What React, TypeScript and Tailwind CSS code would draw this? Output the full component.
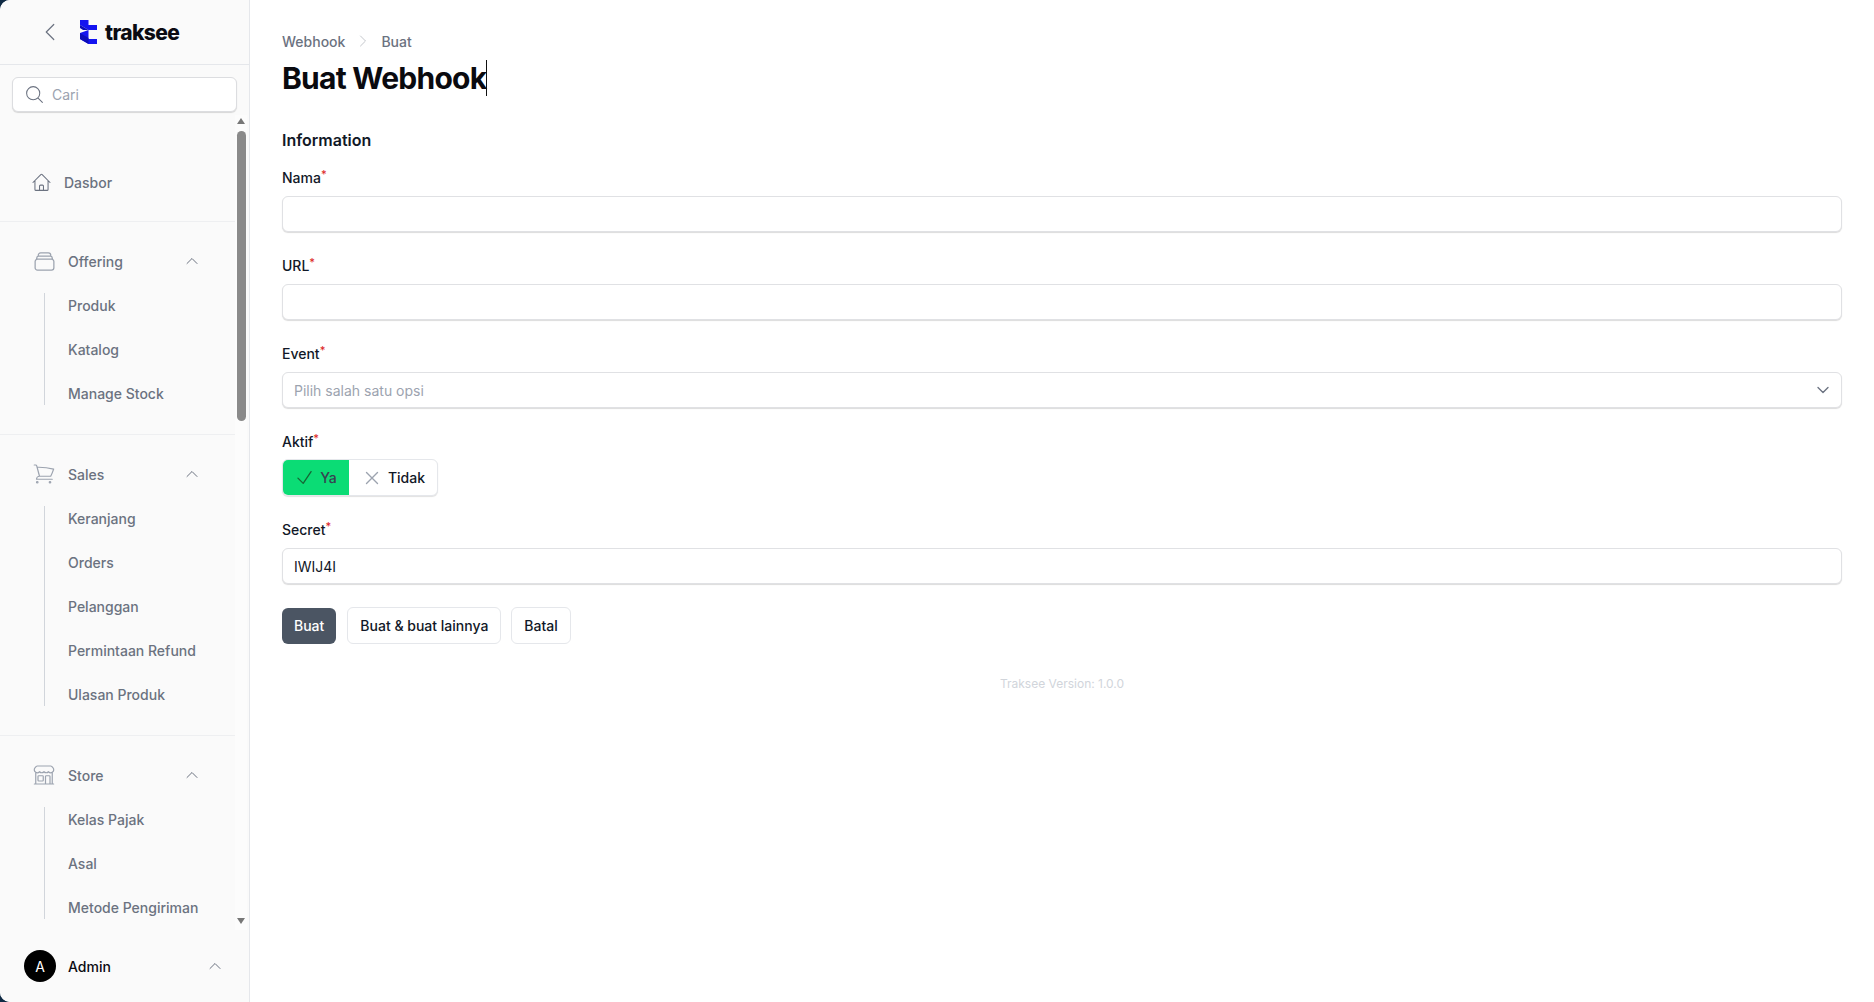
import {
  HiOutlineBuildingStorefront,
  HiOutlineCheck,
  HiOutlineChevronDown,
  HiOutlineChevronLeft,
  HiOutlineChevronRight,
  HiOutlineChevronUp,
  HiOutlineHome,
  HiOutlineMagnifyingGlass,
  HiOutlineRectangleStack,
  HiOutlineShoppingCart,
  HiOutlineXMark,
} from 'react-icons/hi2';
import type { IconType } from 'react-icons';

type NavGroup = { label: string; icon: IconType; iconClass: string; items: string[] };

const groups: NavGroup[] = [
  { label: 'Offering', icon: HiOutlineRectangleStack, iconClass: 'h-[25px] w-[25px]', items: ['Produk', 'Katalog', 'Manage Stock'] },
  { label: 'Sales', icon: HiOutlineShoppingCart, iconClass: 'h-[24px] w-[24px]', items: ['Keranjang', 'Orders', 'Pelanggan', 'Permintaan Refund', 'Ulasan Produk'] },
  { label: 'Store', icon: HiOutlineBuildingStorefront, iconClass: 'h-[24px] w-[24px]', items: ['Kelas Pajak', 'Asal', 'Metode Pengiriman'] },
];

function Logo() {
  return (
    <svg width="17" height="24" viewBox="0 0 17 24" className="shrink-0">
      <path d="M0 0H8.5V5H17V10H8.5L0 5Z" fill="#1414f0" />
      <path d="M0 5L8.5 10H3L0 8Z" fill="#0b0bb8" />
      <path d="M0 13L8.5 10V19H17V24H8.5L0 19Z" fill="#1414f0" />
      <path d="M0 13L8.5 18V24L0 19Z" fill="#0b0bb8" />
    </svg>
  );
}

function Label({ text }: { text: string }) {
  return (
    <div className="flex h-[20px] items-center text-[14px] leading-5 font-medium text-[#111827]">
      {text}
      <span className="relative -top-[4px] text-[11px] leading-none text-[#dc2626]">*</span>
    </div>
  );
}

function Field({ label, value }: { label: string; value?: string }) {
  return (
    <div>
      <Label text={label} />
      <div className="mt-[8px] flex h-9 items-center rounded-md border border-[#e0e1e4] bg-white px-[11px] text-[14px] text-[#111827] shadow-[0_1px_1px_rgba(0,0,0,0.14)]">
        {value}
      </div>
    </div>
  );
}

function Sidebar() {
  return (
    <aside className="flex h-full w-[250px] shrink-0 flex-col rounded-l-[10px] border-r border-[#e5e7eb] bg-[#fafafa]">
      <div className="flex h-[65px] shrink-0 items-center border-b border-[#e5e7eb] pl-[38px]">
        <HiOutlineChevronLeft className="h-[24px] w-[24px] text-[#6b7280]" strokeWidth={1.2} />
        <div className="ml-[18px] flex items-center gap-[8px]">
          <Logo />
          <span className="text-[21px] leading-none font-extrabold tracking-[-0.6px] text-[#0b0b12]">traksee</span>
        </div>
      </div>
      <div className="flex h-[50px] shrink-0 items-start px-3 pt-[12px]">
        <div className="flex h-[35px] w-[225px] items-center rounded-md border border-[#dcdde0] bg-white pl-[11px] text-[14px] text-[#9ca3af] shadow-[0_1px_1px_rgba(0,0,0,0.14)]">
          <HiOutlineMagnifyingGlass className="h-[21px] w-[21px] text-[#6b7280]" strokeWidth={1.2} />
          <span className="ml-[7px]">Cari</span>
        </div>
      </div>
      <div className="flex min-h-0 flex-1 pr-[2px]">
        <nav className="min-w-0 flex-1 overflow-hidden">
          <div className="flex h-[107px] items-end border-b border-[#eeeff1] pb-[27px] pl-[31px]">
            <div className="flex h-6 items-center">
              <HiOutlineHome className="h-[21px] w-[21px] text-[#6b7280]" strokeWidth={1.2} />
              <span className="ml-[12px] text-[14px] font-medium text-[#6b7280]">Dasbor</span>
            </div>
          </div>
          {groups.map((g) => (
            <div key={g.label} className="border-b border-[#eeeff1] pt-[27px] pb-[19px] last:border-b-0">
              <div className="flex h-6 items-center pl-[32px]">
                <div className="flex w-6 shrink-0 justify-center">
                  <g.icon className={`shrink-0 text-[#9ca3af] ${g.iconClass}`} strokeWidth={1.2} />
                </div>
                <span className="ml-[12px] flex-1 text-[14px] font-medium text-[#6b7280]">{g.label}</span>
                <HiOutlineChevronUp className="mr-[35px] h-4 w-4 text-[#6b7280]" />
              </div>
              <div className="relative mt-[10px] ml-[44px] pl-[24px]">
                <div className="absolute top-[10px] bottom-[10px] left-0 w-px bg-[#d1d5db]" />
                {g.items.map((item) => (
                  <div key={item} className="flex h-[44px] items-center text-[14px] font-medium whitespace-nowrap text-[#6b7280]">
                    {item}
                  </div>
                ))}
              </div>
            </div>
          ))}
        </nav>
        <div className="flex w-[12px] shrink-0 flex-col items-center bg-[#fcfcfc] pt-[3px] pb-[6px]">
          <div className="h-0 w-0 border-x-[4px] border-b-[6px] border-x-transparent border-b-[#777]" />
          <div className="mt-[7px] h-[290px] w-[9px] rounded-full bg-[#8a8a8a]" />
          <div className="flex-1" />
          <div className="h-0 w-0 border-x-[4px] border-t-[6px] border-x-transparent border-t-[#777]" />
        </div>
      </div>
      <div className="flex h-[72px] shrink-0 items-center pl-[24px]">
        <div className="flex h-8 w-8 items-center justify-center rounded-full bg-black text-[14px] text-white">A</div>
        <span className="ml-[12px] flex-1 text-[14px] font-medium text-[#0b0b12]">Admin</span>
        <HiOutlineChevronUp className="mr-[26px] h-4 w-4 text-[#6b7280]" />
      </div>
    </aside>
  );
}

export default function App() {
  return (
    <div className="h-[1002px] w-[1874px] overflow-hidden bg-[#0f2a44] font-['Inter',sans-serif]">
      <div className="flex h-full rounded-l-[10px] bg-white">
        <Sidebar />
        <main className="min-w-0 flex-1 px-[32px]">
          <div className="mt-[31px] flex h-5 items-center text-[14px] font-medium text-[#6b7280]">
            <span>Webhook</span>
            <HiOutlineChevronRight className="mx-[10px] h-4 w-4 text-[#c4c7cc]" />
            <span>Buat</span>
          </div>
          <h1 className="mt-[9px] flex h-9 items-center text-[30px] leading-9 font-bold tracking-[-0.75px] text-[#0a0a0f]">
            Buat Webhook
            <span className="h-9 w-px bg-[#111]" />
          </h1>
          <h2 className="mt-[32px] text-[16px] leading-6 font-semibold text-[#111827]">Information</h2>
          <div className="mt-[16px] flex flex-col gap-[24px]">
            <Field label="Nama" />
            <Field label="URL" />
            <div>
              <Label text="Event" />
              <div className="mt-[8px] flex h-9 items-center justify-between rounded-md border border-[#e0e1e4] bg-white pr-[10px] pl-[11px] text-[14px] text-[#9ca3af] shadow-[0_1px_1px_rgba(0,0,0,0.14)]">
                <span>Pilih salah satu opsi</span>
                <HiOutlineChevronDown className="h-4 w-4 text-[#6b7280]" strokeWidth={2} />
              </div>
            </div>
            <div>
              <Label text="Aktif" />
              <div className="mt-[7px] flex h-[37px] w-[156px] overflow-hidden rounded-md border border-[#e5e7eb] bg-white text-[14px] font-medium shadow-[0_1px_1px_rgba(0,0,0,0.12)]">
                <div className="-ml-px flex w-[67px] items-center justify-center gap-[5px] bg-[#0bdc75] text-[#374151]">
                  <HiOutlineCheck className="h-[21px] w-[21px] text-[#166534]" strokeWidth={1.5} />
                  Ya
                </div>
                <div className="flex flex-1 items-center justify-center gap-[5px] text-[#111827]">
                  <HiOutlineXMark className="h-[22px] w-[22px] text-[#9ca3af]" strokeWidth={1.5} />
                  Tidak
                </div>
              </div>
            </div>
            <Field label="Secret" value="IWIJ4I" />
          </div>
          <div className="mt-[23px] flex items-center gap-[10px] text-[14px] font-medium">
            <div className="flex h-9 items-center rounded-md bg-[#4b5563] px-3 text-white">Buat</div>
            <div className="ml-px flex h-[37px] items-center rounded-md border border-[#e5e7eb] bg-white px-3 text-[#111827]">Buat &amp; buat lainnya</div>
            <div className="flex h-[37px] items-center rounded-md border border-[#e5e7eb] bg-white px-3 text-[#111827]">Batal</div>
          </div>
          <p className="mt-[32px] text-center text-[12px] leading-4 text-[#d1d5db]">Traksee Version: 1.0.0</p>
        </main>
      </div>
    </div>
  );
}
